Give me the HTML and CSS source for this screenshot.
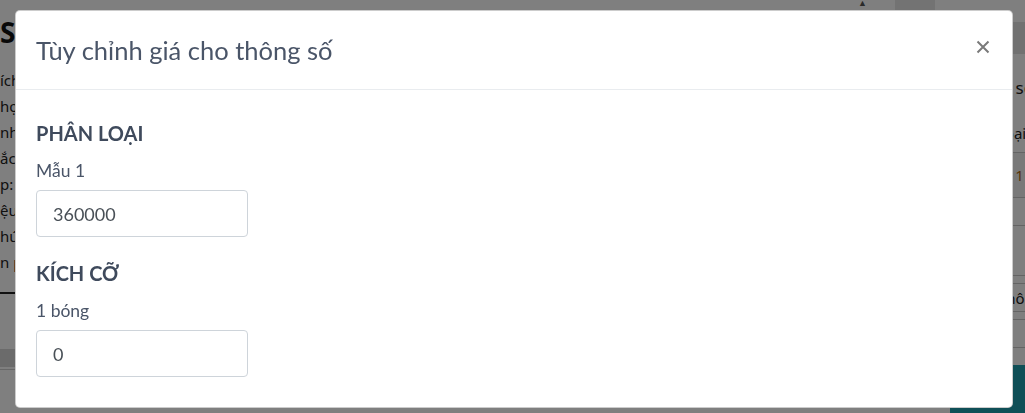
FILE: index.html
```html
<!DOCTYPE html>
<html lang="vi">
<head>
<meta charset="utf-8">
<title>Tùy chỉnh giá cho thông số</title>
<link rel="stylesheet" href="styles.css">
</head>
<body>
<div class="page">
  <div class="main">
    <div class="scrollbox">
      <h2 class="page-title">S</h2>
      <div class="desc">
        <p>ích</p>
        <p>họ</p>
        <p>nh</p>
        <p>ắc</p>
        <p>p:</p>
        <p>ệu</p>
        <p>hú</p>
        <p>n p</p>
      </div>
      <div class="scroll-arrow">▲</div>
    </div>
    <div class="rule"></div>
    <div class="hscroll"></div>
    <div class="footer-line"></div>
  </div>
  <div class="gutter"></div>
  <div class="side">
    <div class="side-bar"></div>
    <div class="side-title">Thông số</div>
    <div class="side-label">Phân loại</div>
    <div class="side-table">
      <div class="side-row tall"><span class="num">Mẫu 1</span></div>
      <div class="side-row"></div>
      <div class="side-row tall2"></div>
      <div class="side-row short"></div>
      <div class="side-row name"><span>Thông</span></div>
      <div class="side-row short"></div>
      <div class="side-row"></div>
    </div>
    <div class="side-btn"></div>
  </div>
</div>

<div class="backdrop"></div>

<div class="modal" role="dialog">
  <div class="modal-header">
    <h5 class="modal-title">Tùy chỉnh giá cho thông số</h5>
    <button class="close" type="button" aria-label="Close">
      <svg width="14" height="14" viewBox="0 0 14 14"><path d="M1.5 1.5 L12.5 12.5 M12.5 1.5 L1.5 12.5" stroke="#7a7a7a" stroke-width="2" stroke-linecap="butt"/></svg>
    </button>
  </div>
  <div class="modal-body">
    <div class="group">
      <div class="group-title">PHÂN LOẠI</div>
      <label class="field-label">Mẫu 1</label>
      <input class="field-input" type="text" value="360000">
    </div>
    <div class="group">
      <div class="group-title">KÍCH CỠ</div>
      <label class="field-label">1 bóng</label>
      <input class="field-input" type="text" value="0">
    </div>
  </div>
</div>
</body>
</html>
```

FILE: styles.css
```css
* { box-sizing: border-box; }
html, body { margin: 0; padding: 0; }
body {
  width: 1025px;
  height: 413px;
  overflow: hidden;
  background: #fff;
  font-family: "Noto Sans", "Liberation Sans", sans-serif;
  color: #212529;
}

/* underlying page */
.page { display: flex; height: 413px; }
.main { width: 895px; flex: none; display: flex; flex-direction: column; }
.scrollbox { height: 292px; position: relative; padding-top: 18px; }
.page-title { margin: 0; font-size: 28px; line-height: 28px; font-weight: 700; color: #111; }
.desc { margin-top: 21px; }
.desc p { margin: 0; font-size: 15px; line-height: 26px; color: #222; }
.scroll-arrow { position: absolute; left: 858px; top: -4px; font-size: 9px; color: #555; }
.rule { height: 2px; background: #222; }
.hscroll { margin-top: 55px; height: 18px; background: #d6d6d6; }
.footer-line { margin-top: 2px; height: 1px; background: #cfcfcf; margin-bottom: 30px; }
.gutter { width: 40px; flex: none; background: #e6e6e6; height: 10px; }
.side { flex: 1; min-width: 0; display: flex; flex-direction: column; padding-top: 22px; white-space: nowrap; }
.side-bar { height: 32px; background: #e2e2e2; }
.side-title { margin-top: 24px; font-size: 17px; line-height: 20px; color: #222; padding-left: 25px; }
.side-label { margin-top: 25px; font-size: 15px; line-height: 20px; color: #222; padding-left: 26px; }
.side-table { margin-top: 9px; border-top: 1px solid #c8c8c8; }
.side-row { height: 28px; border-bottom: 1px solid #c8c8c8; font-size: 15px; padding-left: 45px; line-height: 28px; color: #222; }
.side-row.tall { height: 45px; line-height: 45px; background: #f3f3f3; color: #b06a10; }
.side-row.tall2 { height: 50px; }
.side-row.short { height: 8px; }
.side-row.name { padding-left: 63px; }
.side-btn { margin-top: 17px; margin-left: 15px; height: 48px; background: #1e9eae; border-radius: 4px 0 0 0; }

/* overlay */
.backdrop {
  position: fixed;
  inset: 0;
  background: rgba(0, 0, 0, 0.5);
}

.modal {
  position: fixed;
  left: 15px;
  top: 10px;
  width: 998px;
  height: 398px;
  background: #fff;
  border: 1px solid rgba(0, 0, 0, 0.2);
  border-radius: 5px;
  font-family: "Lato", "Noto Sans", sans-serif;
  display: flex;
  flex-direction: column;
}

.modal-header {
  height: 79px;
  flex: none;
  display: flex;
  align-items: center;
  justify-content: space-between;
  padding: 0 22px 0 20px;
  border-bottom: 1px solid #e9ecef;
}

.modal-title {
  margin: 0;
  font-size: 25.5px;
  font-weight: 400;
  line-height: 30px;
  color: #4a5568;
}

.close {
  border: 0;
  background: transparent;
  padding: 0;
  width: 14px;
  height: 14px;
  display: flex;
  cursor: pointer;
  margin-top: -6px;
}

.modal-body {
  padding: 31px 20px 0;
  display: flex;
  flex-direction: column;
  gap: 24px;
}

.group { display: flex; flex-direction: column; align-items: flex-start; }

.group-title {
  font-size: 20px;
  font-weight: 700;
  line-height: 24px;
  color: #3f4a5c;
}

.field-label {
  margin-top: 14px;
  font-size: 17.5px;
  line-height: 24px;
  color: #4a5568;
}

.field-input {
  margin-top: 7px;
  width: 212px;
  height: 47px;
  border: 1px solid #ced4da;
  border-radius: 4px;
  padding: 0 16px;
  font-family: "Lato", "Noto Sans", sans-serif;
  font-size: 18px;
  color: #495057;
  background: #fff;
  outline: none;
}
```
